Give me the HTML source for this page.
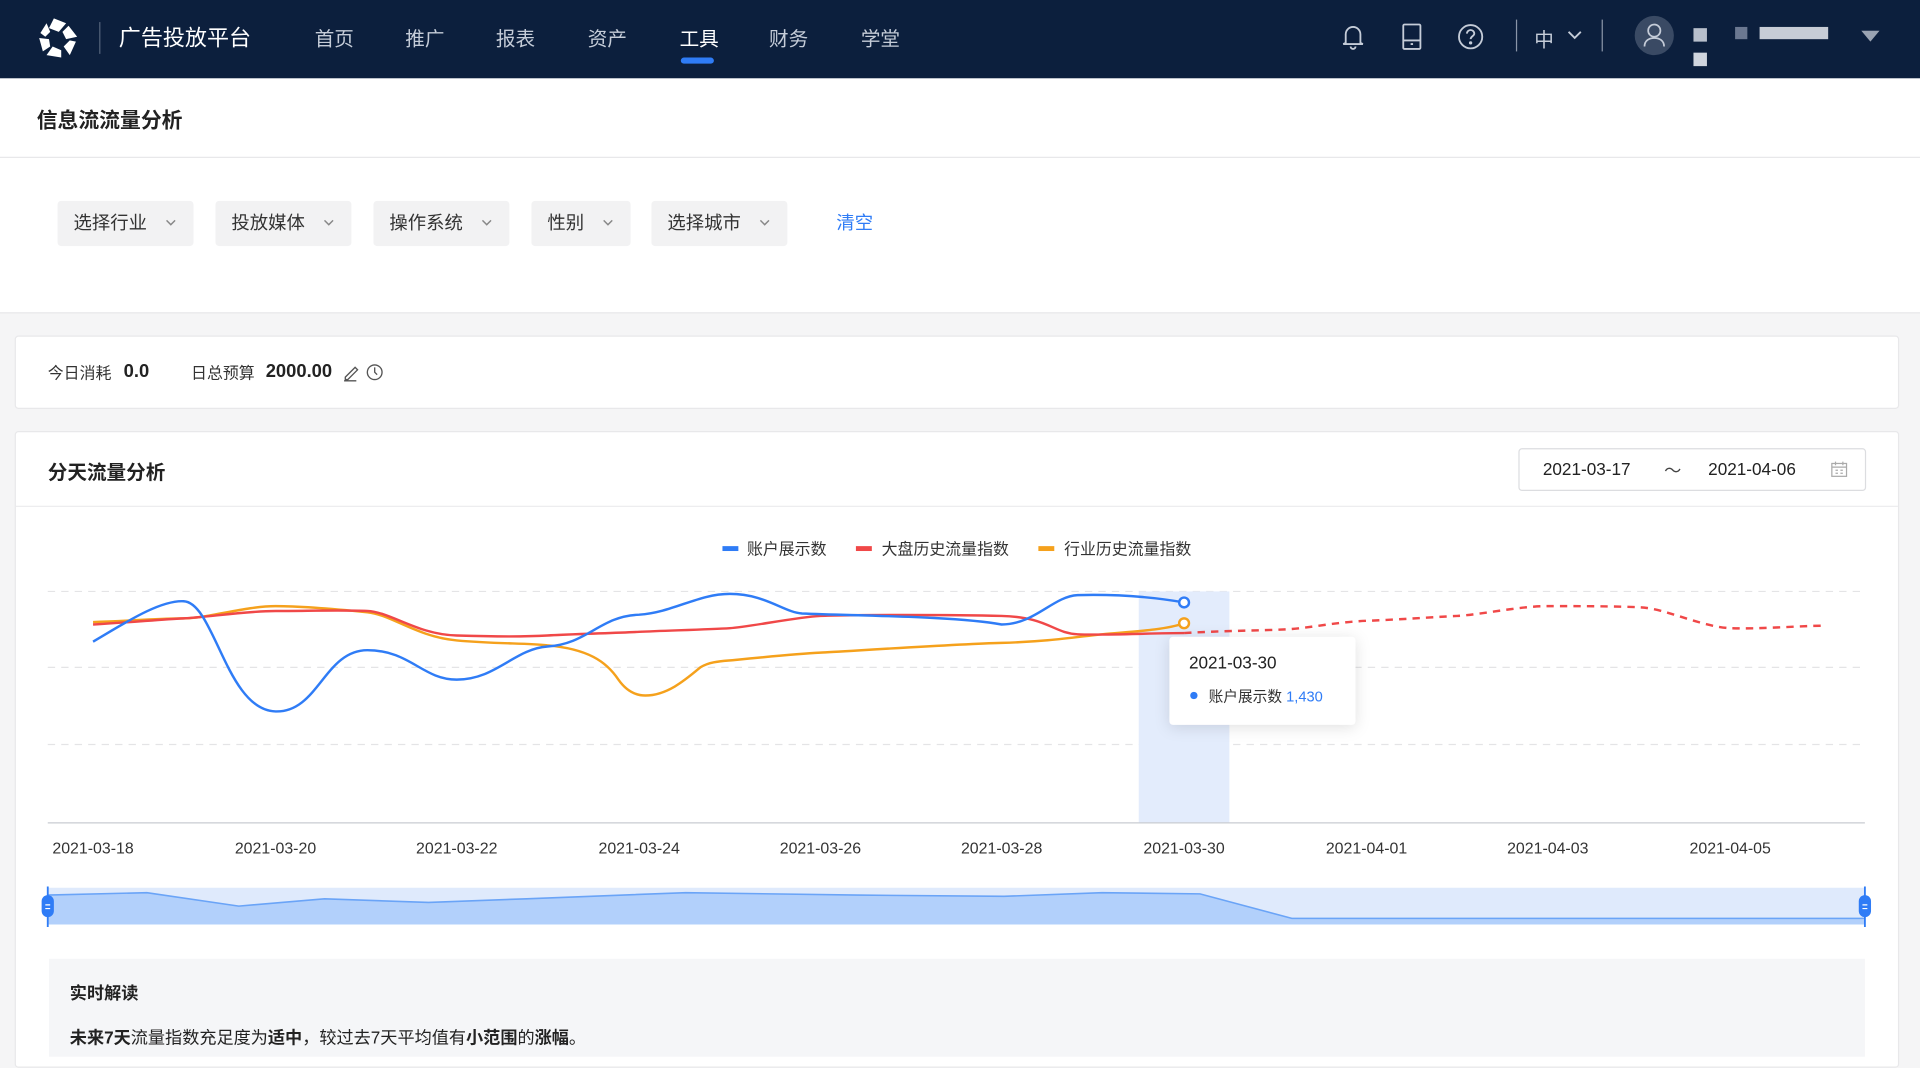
<!DOCTYPE html>
<html><head><meta charset="utf-8">
<style>
*{margin:0;padding:0;box-sizing:border-box}
html,body{width:1920px;height:1048px;overflow:hidden;background:#f5f5f6}
#w{position:absolute;left:0;top:0;width:1568px;height:856px;transform:scale(1.22449);transform-origin:0 0;font-family:"Liberation Sans","Noto Sans CJK SC",sans-serif;color:#222}
.a{position:absolute;white-space:nowrap}
.nav{position:absolute;left:0;top:0;width:1568px;height:64px;background:#0c1f3d}
.nv{position:absolute;top:18px;font-size:16px;color:#c5ccd8}
.flt{position:absolute;top:164px;height:37px;background:#f2f2f3;border-radius:3px;font-size:15px;color:#333;padding:7px 0 0 13px}
.flt svg{position:absolute;right:14px;top:15px}
.card{position:absolute;background:#fff;border:1px solid #e8e8ea;border-radius:3px}
</style></head><body>
<div id="w">
<div class="nav">
 <svg class="a" style="left:30px;top:13px" width="36" height="36" viewBox="0 0 36 36"><g fill="#fff"><path d="M14 2l10 4-6 7-8-3z"/><path d="M26 8l7 9-9 2-3-6z"/><path d="M32 21l-5 11-5-7 5-5z"/><path d="M20 34l-12-2 5-7 7 3z"/><path d="M5 29l-3-11 8 1 1 6z"/><path d="M3 14l5-8 3 7-4 4z"/></g></svg>
 <div class="a" style="left:81px;top:18px;width:1px;height:26px;background:#53627a"></div>
 <div class="a" style="left:97px;top:17px;font-size:18px;color:#fff">广告投放平台</div>
 <div class="nv" style="left:257px">首页</div>
 <div class="nv" style="left:331px">推广</div>
 <div class="nv" style="left:405px">报表</div>
 <div class="nv" style="left:480px">资产</div>
 <div class="nv" style="left:555px;color:#fff">工具</div>
 <div class="a" style="left:556px;top:47px;width:27px;height:5px;border-radius:3px;background:#2f7cf6"></div>
 <div class="nv" style="left:628px">财务</div>
 <div class="nv" style="left:703px">学堂</div>
 <svg class="a" style="left:1095px;top:19px" width="20" height="22" viewBox="0 0 20 22" fill="none" stroke="#c5ccd8" stroke-width="1.5"><path d="M4 16V9a6 6 0 0112 0v7l2 1H2z"/><path d="M8 19a2 2 0 004 0"/></svg>
 <svg class="a" style="left:1145px;top:19px" width="16" height="22" viewBox="0 0 16 22" fill="none" stroke="#c5ccd8" stroke-width="1.5"><rect x="1" y="1" width="14" height="20" rx="1"/><path d="M1 14h14M7 17h2"/></svg>
 <svg class="a" style="left:1190px;top:19px" width="22" height="22" viewBox="0 0 22 22" fill="none" stroke="#c5ccd8" stroke-width="1.5"><circle cx="11" cy="11" r="9.5"/><path d="M8 8.5a3 3 0 116 0c0 2-3 2-3 4.5"/><circle cx="11" cy="16" r=".6" fill="#c5ccd8"/></svg>
 <div class="a" style="left:1238px;top:16px;width:1px;height:26px;background:#8a95a8"></div>
 <div class="a" style="left:1253px;top:19px;font-size:16px;color:#c5ccd8">中</div>
 <svg class="a" style="left:1280px;top:25px" width="12" height="8" viewBox="0 0 12 8" fill="none" stroke="#c5ccd8" stroke-width="1.5"><path d="M1 1l5 5 5-5"/></svg>
 <div class="a" style="left:1308px;top:16px;width:1px;height:26px;background:#8a95a8"></div>
 <div class="a" style="left:1335px;top:13px;width:32px;height:32px;border-radius:50%;background:#3a4a64"></div>
 <svg class="a" style="left:1341px;top:18px" width="20" height="22" viewBox="0 0 20 22" fill="none" stroke="#c5ccd8" stroke-width="1.4"><circle cx="10" cy="7" r="5"/><path d="M2 20c0-5 4-7 8-7s8 2 8 7"/></svg>
 <div class="a" style="left:1383px;top:23px;width:11px;height:11px;background:#b8bfcc"></div>
 <div class="a" style="left:1383px;top:43px;width:11px;height:11px;background:#d0d5de"></div>
 <div class="a" style="left:1417px;top:22px;width:10px;height:10px;background:#6b7891"></div>
 <div class="a" style="left:1437px;top:22px;width:56px;height:10px;background:#c7ccd6"></div>
 <svg class="a" style="left:1520px;top:25px" width="15" height="9"><path d="M0 0h15L7.5 9z" fill="#9aa3b2"/></svg>
</div>
<div class="a" style="left:0;top:64px;width:1568px;height:191px;background:#fff"></div>
<div class="a" style="left:0;top:128px;width:1568px;height:1px;background:#e8e8ea"></div>
<div class="a" style="left:0;top:255px;width:1568px;height:1px;background:#e8e8ea"></div>
<div class="a" style="left:30px;top:84px;font-size:17px;font-weight:bold;color:#222">信息流流量分析</div>
<div class="flt" style="left:47px;width:111px">选择行业<svg width="9" height="6"><path d="M1 1l3.5 3.5L8 1" fill="none" stroke="#888" stroke-width="1.2"/></svg></div>
<div class="flt" style="left:176px;width:111px">投放媒体<svg width="9" height="6"><path d="M1 1l3.5 3.5L8 1" fill="none" stroke="#888" stroke-width="1.2"/></svg></div>
<div class="flt" style="left:305px;width:111px">操作系统<svg width="9" height="6"><path d="M1 1l3.5 3.5L8 1" fill="none" stroke="#888" stroke-width="1.2"/></svg></div>
<div class="flt" style="left:434px;width:81px">性别<svg width="9" height="6"><path d="M1 1l3.5 3.5L8 1" fill="none" stroke="#888" stroke-width="1.2"/></svg></div>
<div class="flt" style="left:532px;width:111px">选择城市<svg width="9" height="6"><path d="M1 1l3.5 3.5L8 1" fill="none" stroke="#888" stroke-width="1.2"/></svg></div>
<div class="a" style="left:683px;top:171px;font-size:15px;color:#2f7cf6">清空</div>

<div class="card" style="left:12px;top:274px;width:1539px;height:60px"></div>
<div class="a" style="left:39px;top:294px;font-size:13px;color:#333">今日消耗</div>
<div class="a" style="left:101px;top:295px;font-size:15px;font-weight:bold;color:#222">0.0</div>
<div class="a" style="left:156px;top:294px;font-size:13px;color:#333">日总预算</div>
<div class="a" style="left:217px;top:295px;font-size:15px;font-weight:bold;color:#222">2000.00</div>
<svg class="a" style="left:280px;top:296px" width="34" height="16" fill="none" stroke="#555" stroke-width="1.1"><path d="M2 12l8-8 2 2-8 8H2zM1 15h10"/><circle cx="26" cy="8" r="6"/><path d="M26 4v4l2 2"/></svg>

<div class="card" style="left:12px;top:352px;width:1539px;height:520px"></div>
<div class="a" style="left:13px;top:413px;width:1537px;height:1px;background:#ececee"></div>
<div class="a" style="left:39px;top:372px;font-size:16px;font-weight:bold;color:#222">分天流量分析</div>
<div class="a" style="left:1240px;top:366px;width:284px;height:35px;border:1px solid #dcdde0;border-radius:3px;background:#fff"></div>
<div class="a" style="left:1260px;top:375px;font-size:14px;color:#222">2021-03-17</div>
<div class="a" style="left:1359px;top:374px;font-size:14px;color:#444">～</div>
<div class="a" style="left:1395px;top:375px;font-size:14px;color:#222">2021-04-06</div>
<svg class="a" style="left:1495px;top:376px" width="14" height="14" fill="none" stroke="#aaa" stroke-width="1"><rect x="1" y="2.5" width="12" height="10.5"/><path d="M1 5.5h12M4 1v3M10 1v3M4 8h2M8 8h2M4 10.5h2M8 10.5h2"/></svg>

<svg class="a" style="left:0;top:0" width="1568" height="856" viewBox="0 0 1568 856">
 <rect x="590" y="446" width="13" height="4" fill="#2f7cf6"/><text x="610" y="453" font-size="13" fill="#333" font-family="Liberation Sans,Noto Sans CJK SC,sans-serif">账户展示数</text>
 <rect x="699" y="446" width="13" height="4" fill="#f04848"/><text x="720" y="453" font-size="13" fill="#333" font-family="Liberation Sans,Noto Sans CJK SC,sans-serif">大盘历史流量指数</text>
 <rect x="848" y="446" width="13" height="4" fill="#f5a11c"/><text x="869" y="453" font-size="13" fill="#333" font-family="Liberation Sans,Noto Sans CJK SC,sans-serif">行业历史流量指数</text>
 <g stroke="#e4e4e6" stroke-dasharray="6 5"><path d="M39 483H1523M39 545H1523M39 608H1523"/></g>
 <rect x="930" y="483" width="74" height="189" fill="#e3ecfc"/>
 <path d="M39 672H1523" stroke="#c9ccd2"/>
 <g font-size="13" fill="#333" text-anchor="middle" font-family="Liberation Sans,sans-serif">
  <text x="76" y="697">2021-03-18</text><text x="225" y="697">2021-03-20</text><text x="373" y="697">2021-03-22</text><text x="522" y="697">2021-03-24</text><text x="670" y="697">2021-03-26</text><text x="818" y="697">2021-03-28</text><text x="967" y="697">2021-03-30</text><text x="1116" y="697">2021-04-01</text><text x="1264" y="697">2021-04-03</text><text x="1413" y="697">2021-04-05</text>
 </g>
 <g fill="none" stroke-width="2" stroke-linejoin="round">
  <path stroke="#f5a11c" d="M76 508C110 507 130 505 150 505S200 495 225 495S280 498 300 500S340 520 373 523S430 525 447 527C480 530 495 540 505 555C512 565 520 568 527 568C545 568 560 555 572 545C580 540 590 540 600 539S650 534 670 533S780 526 818 525S880 520 900 518S950 515 967 509"/>
  <path stroke="#f04848" d="M76 510C110 508 130 506 150 505S200 499 225 499S280 498 300 499S340 518 373 519S430 520 447 519S500 517 522 516S580 514 596 513S650 504 670 503S780 502 818 503S860 517 880 518S940 517 967 517"/>
  <path stroke="#f04848" stroke-dasharray="6 5" d="M967 517C1000 515 1030 515 1050 514S1090 508 1116 507S1170 504 1190 503S1240 495 1264 495S1320 495 1340 496S1390 512 1413 513S1470 511 1490 511"/>
  <path stroke="#2f7cf6" d="M76 524C100 510 130 490 150 491C175 492 185 580 225 581C260 582 265 531 300 531C335 531 345 555 373 555C405 555 420 530 447 528C480 526 490 503 522 502C550 500 570 485 596 485C625 485 640 500 655 501C700 503 780 503 818 510C845 510 860 487 880 486C920 485 950 489 967 492"/>
 </g>
 <circle cx="967" cy="492" r="4" fill="#fff" stroke="#2f7cf6" stroke-width="2"/>
 <circle cx="967" cy="509" r="4" fill="#fff" stroke="#f5a11c" stroke-width="2"/>
 <rect x="955" y="520" width="152" height="72" rx="3" fill="#fff" style="filter:drop-shadow(0 2px 6px rgba(0,0,0,.12))"/>
 <text x="971" y="546" font-size="14" fill="#222" font-family="Liberation Sans,sans-serif">2021-03-30</text>
 <circle cx="975" cy="568" r="3" fill="#2f7cf6"/>
 <text x="987" y="573" font-size="12" fill="#333" font-family="Liberation Sans,Noto Sans CJK SC,sans-serif">账户展示数 <tspan fill="#2f7cf6">1,430</tspan></text>
 <rect x="39" y="725" width="1484" height="30" fill="#dfeafc"/>
 <path d="M39 731L120 729L195 740L265 734L350 737L430 734L560 729L700 731L820 732L900 729L980 730L1055 750L1523 750V755H39Z" fill="#b2d0fb"/>
 <path d="M39 731L120 729L195 740L265 734L350 737L430 734L560 729L700 731L820 732L900 729L980 730L1055 750L1523 750" fill="none" stroke="#6aa4f7" stroke-width="1.3"/>
 <path d="M39 724V757M1523 724V757" stroke="#2f7cf6" stroke-width="1.5"/>
 <rect x="34" y="731" width="10" height="18" rx="5" fill="#2f7cf6"/><rect x="1518" y="731" width="10" height="18" rx="5" fill="#2f7cf6"/>
 <path d="M37 739h4M37 742h4M1521 739h4M1521 742h4" stroke="#fff"/>
</svg>
<div class="a" style="left:40px;top:783px;width:1483px;height:80px;background:#f5f6f8"></div>
<div class="a" style="left:57px;top:801px;font-size:14px;font-weight:bold;color:#222">实时解读</div>
<div class="a" style="left:57px;top:837px;font-size:14px;color:#222"><b>未来7天</b>流量指数充足度为<b>适中</b>，较过去7天平均值有<b>小范围</b>的<b>涨幅</b>。</div>
</div>
</body></html>
